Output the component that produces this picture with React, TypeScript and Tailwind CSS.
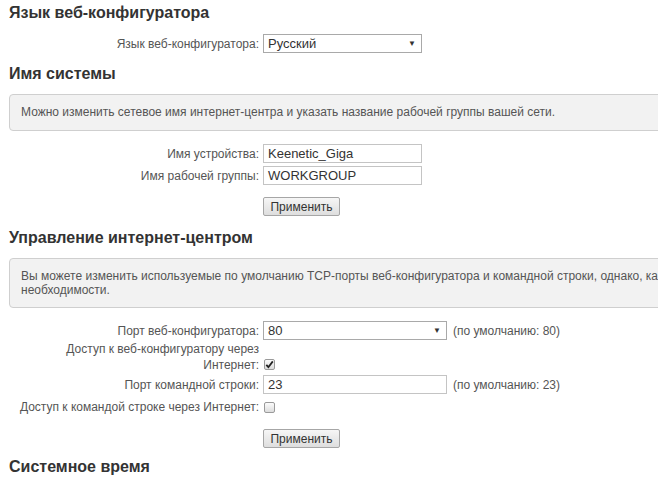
import React from 'react';

const Heading = ({ children, className = '' }: { children: React.ReactNode; className?: string }) => (
  <h2 className={`text-[16px] leading-[18px] font-bold text-[#333] ${className}`}>{children}</h2>
);

const Label = ({ children }: { children: React.ReactNode }) => (
  <div className="w-[250px] shrink-0 text-right text-[12px] leading-[16px] text-[#555]">{children}</div>
);

const Select = ({ value, width }: { value: string; width: string }) => (
  <div
    className={`${width} h-[19px] flex items-center justify-between border border-[#a9a9a9] bg-white pl-[4px] pr-[5px] text-[13px] text-[#333]`}
  >
    <span>{value}</span>
    <span className="text-[8px] text-[#333]">▼</span>
  </div>
);

const Input = ({ value, width }: { value: string; width: string }) => (
  <div
    className={`${width} h-[19px] flex items-center border border-[#c4c4c4] bg-white px-[4px] text-[13px] text-[#333]`}
  >
    {value}
  </div>
);

const Checkbox = ({ checked }: { checked?: boolean }) => (
  <div className="w-[11px] h-[11px] flex items-center justify-center rounded-[2px] border border-[#9a9a9a] bg-gradient-to-b from-[#fcfcfc] to-[#dcdcdc]">
    {checked && (
      <svg width="9" height="9" viewBox="0 0 9 9">
        <path d="M1.3 4.8 L3.4 7.2 L7.8 1.4" fill="none" stroke="#222" strokeWidth="1.8" />
      </svg>
    )}
  </div>
);

const ApplyButton = ({ className = '' }: { className?: string }) => (
  <div className={`flex ${className}`}>
    <div className="ml-[254px] w-[77px] h-[19px] flex items-center justify-center rounded-[2px] border border-[#a6a6a6] bg-gradient-to-b from-[#f6f6f6] to-[#dedede] text-[12px] text-[#333]">
      Применить
    </div>
  </div>
);

const Hint = ({ children }: { children: React.ReactNode }) => (
  <span className="ml-[2px] text-[12px] text-[#555]">{children}</span>
);

export default function App() {
  return (
    <div className="w-[658px] h-[477px] overflow-hidden bg-white px-[9px] pt-[4px] font-['Liberation_Sans',Arial,sans-serif]">
      <Heading>Язык веб-конфигуратора</Heading>

      <div className="mt-[12px] flex items-center gap-[4px]">
        <Label>Язык веб-конфигуратора:</Label>
        <Select value="Русский" width="w-[159px]" />
      </div>

      <Heading className="mt-[12px]">Имя системы</Heading>

      <div className="mt-[11px] w-[760px] rounded-[4px] border border-[#cfcfcf] bg-[#f2f2f2] px-[11px] py-[10px] text-[12px] leading-[15px] text-[#555] whitespace-nowrap">
        Можно изменить сетевое имя интернет-центра и указать название рабочей группы вашей сети.
      </div>

      <div className="mt-[13px] flex items-center gap-[4px]">
        <Label>Имя устройства:</Label>
        <Input value="Keenetic_Giga" width="w-[159px]" />
      </div>
      <div className="mt-[3px] flex items-center gap-[4px]">
        <Label>Имя рабочей группы:</Label>
        <Input value="WORKGROUP" width="w-[159px]" />
      </div>

      <ApplyButton className="mt-[12px]" />

      <Heading className="mt-[13px]">Управление интернет-центром</Heading>

      <div className="mt-[11px] w-[760px] rounded-[4px] border border-[#cfcfcf] bg-[#f2f2f2] px-[11px] py-[10px] text-[12px] leading-[14px] text-[#555] whitespace-nowrap">
        Вы можете изменить используемые по умолчанию TCP-порты веб-конфигуратора и командной строки, однако, как правило, в этом нет
        <br />
        необходимости.
      </div>

      <div className="mt-[13px] flex items-center gap-[4px]">
        <Label>Порт веб-конфигуратора:</Label>
        <Select value="80" width="w-[184px]" />
        <Hint>(по умолчанию: 80)</Hint>
      </div>

      <div className="mt-[1px] flex items-end gap-[4px]">
        <Label>
          Доступ к веб-конфигуратору через
          <br />
          Интернет:
        </Label>
        <div className="mb-[3px] ml-[1px]">
          <Checkbox checked />
        </div>
      </div>

      <div className="mt-[2px] flex items-center gap-[4px]">
        <Label>Порт командной строки:</Label>
        <Input value="23" width="w-[184px]" />
        <Hint>(по умолчанию: 23)</Hint>
      </div>

      <div className="mt-[5px] flex items-center gap-[4px]">
        <Label>Доступ к командой строке через Интернет:</Label>
        <div className="ml-[1px]">
          <Checkbox />
        </div>
      </div>

      <ApplyButton className="mt-[14px]" />

      <Heading className="mt-[10px]">Системное время</Heading>
    </div>
  );
}
